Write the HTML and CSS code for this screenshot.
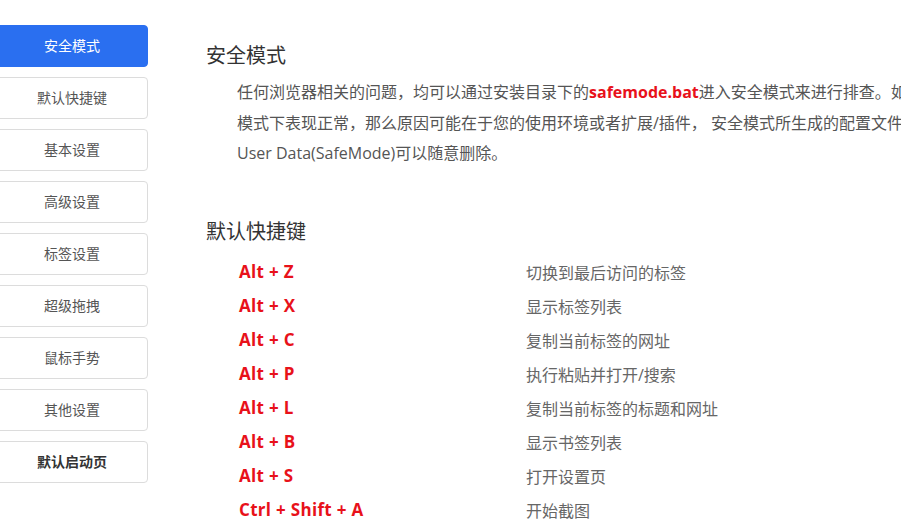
FILE: index.html
```html
<!DOCTYPE html>
<html lang="zh-CN">
<head>
<meta charset="utf-8">
<title>设置</title>
<link rel="stylesheet" href="styles.css">
</head>
<body>
<div class="page">
  <nav class="sidebar">
    <a class="nav-btn active">安全模式</a>
    <a class="nav-btn">默认快捷键</a>
    <a class="nav-btn">基本设置</a>
    <a class="nav-btn">高级设置</a>
    <a class="nav-btn">标签设置</a>
    <a class="nav-btn">超级拖拽</a>
    <a class="nav-btn">鼠标手势</a>
    <a class="nav-btn">其他设置</a>
    <a class="nav-btn strong">默认启动页</a>
  </nav>
  <main class="content">
    <section class="section">
      <h2 class="section-title">安全模式</h2>
      <p class="desc">任何浏览器相关的问题，均可以通过安装目录下的<b class="hl">safemode.bat</b>进入安全模式来进行排查。如果在安全模式下表现正常，那么原因可能在于您的使用环境或者扩展/插件， 安全模式所生成的配置文件夹 User&nbsp;Data(SafeMode)可以随意删除。</p>
    </section>
    <section class="section shortcuts">
      <h2 class="section-title">默认快捷键</h2>
      <ul class="keys">
        <li class="key-row"><span class="key">Alt + Z</span><span class="action">切换到最后访问的标签</span></li>
        <li class="key-row"><span class="key">Alt + X</span><span class="action">显示标签列表</span></li>
        <li class="key-row"><span class="key">Alt + C</span><span class="action">复制当前标签的网址</span></li>
        <li class="key-row"><span class="key">Alt + P</span><span class="action">执行粘贴并打开/搜索</span></li>
        <li class="key-row"><span class="key">Alt + L</span><span class="action">复制当前标签的标题和网址</span></li>
        <li class="key-row"><span class="key">Alt + B</span><span class="action">显示书签列表</span></li>
        <li class="key-row"><span class="key">Alt + S</span><span class="action">打开设置页</span></li>
        <li class="key-row"><span class="key">Ctrl + Shift + A</span><span class="action">开始截图</span></li>
      </ul>
    </section>
  </main>
</div>
</body>
</html>
```
FILE: styles.css
```css
html, body {
  margin: 0;
  padding: 0;
  background: #fff;
  overflow: hidden;
}
body {
  font-family: "Open Sans", "Noto Sans CJK SC", sans-serif;
  color: #555;
}
.page {
  display: flex;
  align-items: flex-start;
  width: 1100px;
}
.sidebar {
  flex: none;
  width: 152px;
  margin-left: -4px;
  padding-top: 25px;
  display: flex;
  flex-direction: column;
  gap: 10px;
}
.nav-btn {
  box-sizing: border-box;
  height: 42px;
  padding-bottom: 2px;
  display: flex;
  align-items: center;
  justify-content: center;
  border: 1px solid #dcdcdc;
  border-radius: 4px;
  font-family: "Noto Sans CJK SC", sans-serif;
  font-size: 14px;
  color: #555;
  background: #fff;
}
.nav-btn.active {
  background: #2a6ff0;
  border-color: #2a6ff0;
  color: #fff;
}
.nav-btn.strong {
  font-weight: bold;
  color: #333;
}
.content {
  flex: none;
  width: 800px;
  margin-left: 59px;
  padding-top: 40px;
}
.section-title {
  margin: 0 0 0 -1px;
  font-size: 20px;
  line-height: 29px;
  font-weight: normal;
  color: #333;
  font-family: "Noto Sans CJK SC", sans-serif;
}
.desc {
  margin: 8px 0 0;
  padding-left: 30px;
  width: 735px;
  font-size: 16px;
  line-height: 30.5px;
  color: #555;
}
.hl {
  color: #e8111a;
  font-weight: bold;
}
.shortcuts {
  margin-top: 47px;
}
.keys {
  list-style: none;
  margin: 10px 0 0;
  padding: 0 0 0 32px;
}
.key-row {
  display: flex;
  height: 34px;
  align-items: center;
  font-size: 16px;
}
.key {
  width: 287px;
  flex: none;
  color: #e8111a;
  font-weight: bold;
  font-size: 17px;
  letter-spacing: 0.3px;
}
.action {
  color: #666;
}
```
